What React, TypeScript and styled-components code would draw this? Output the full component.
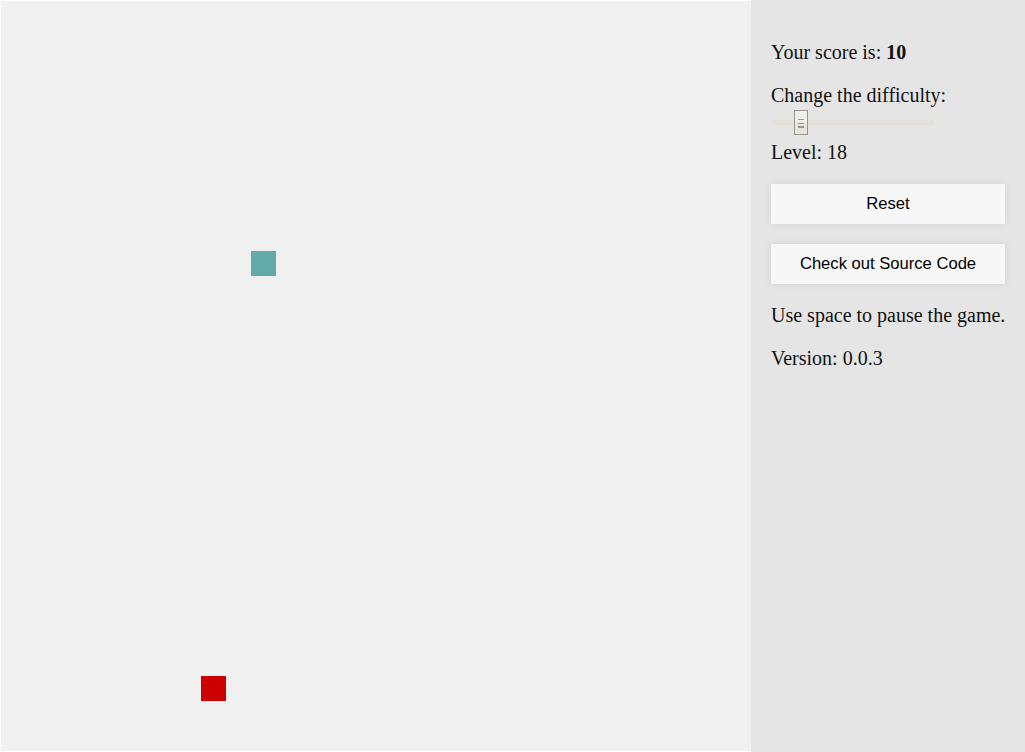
import React, { useState } from 'react';
import styled, { createGlobalStyle } from 'styled-components';

const GlobalStyle = createGlobalStyle`
  html, body {
    margin: 0;
    padding: 0;
    background: #ffffff;
    overflow: hidden;
  }
`;

const CELL = 25;

const S = {
    Page: styled.div`
    display: flex;
    width: 1025px;
    height: 752px;
    padding: 1px 0 0 1px;
    box-sizing: border-box;
  `,
    Board: styled.div`
    position: relative;
    width: 750px;
    height: 750px;
    background: #f0f0f0;
    flex: none;
  `,
    Cell: styled.div<{ $color: string }>`
    position: absolute;
    width: ${CELL}px;
    height: ${CELL}px;
    background: ${p => p.$color};
  `,
    Sidebar: styled.aside`
    flex: 1;
    margin-top: -1px;
    background: #e5e5e5;
    padding: 41px 20px 0 20px;
    display: flex;
    flex-direction: column;
    align-items: flex-start;
    font-family: "Liberation Serif", "Times New Roman", serif;
    font-size: 20px;
    color: #111;
  `,
    Text: styled.p<{ $gap?: number }>`
    margin: 0 0 ${p => p.$gap ?? 20}px 0;
    line-height: 23px;
    white-space: nowrap;
  `,
    Slider: styled.input`
    appearance: none;
    -webkit-appearance: none;
    width: 161px;
    height: 25px;
    margin: 3px 0 6px 2px;
    padding: 0;
    background: transparent;
    &::-webkit-slider-runnable-track {
      height: 5px;
      background: #e4dfd8;
    }
    &::-webkit-slider-thumb {
      -webkit-appearance: none;
      width: 14px;
      height: 25px;
      margin-top: -10px;
      box-sizing: border-box;
      border: 1px solid #9a958f;
      background:
        linear-gradient(#9a958f, #9a958f) 3px 8px / 6px 1px no-repeat,
        linear-gradient(#9a958f, #9a958f) 3px 12px / 6px 1px no-repeat,
        linear-gradient(#9a958f, #9a958f) 3px 15px / 6px 2px no-repeat,
        linear-gradient(#f0eeeb 50%, #e7e4df 50%);
    }
  `,
    Button: styled.button`
    width: 234px;
    height: 40px;
    border: none;
    padding: 0;
    background: #f7f7f7;
    box-shadow: 0 0 8px rgba(0, 0, 0, 0.08);
    font-family: "Liberation Sans", Arial, sans-serif;
    font-size: 16.6px;
    color: #000;
    cursor: pointer;
    margin: 0 0 20px 0;
  `,
};

const App: React.FC = () => {
    const [level, setLevel] = useState(18);
    return (
        <>
            <GlobalStyle />
            <S.Page>
                <S.Board>
                    <S.Cell $color="#62aaa8" style={{ left: 250, top: 250 }} />
                    <S.Cell $color="#cc0000" style={{ left: 200, top: 675 }} />
                </S.Board>
                <S.Sidebar>
                    <S.Text>
                        Your score is: <b>10</b>
                    </S.Text>
                    <S.Text $gap={0}>Change the difficulty:</S.Text>
                    <S.Slider
                        type="range"
                        min={1}
                        max={120}
                        value={level}
                        onChange={e => setLevel(Number(e.target.value))}
                    />
                    <S.Text>Level: {level}</S.Text>
                    <S.Button>Reset</S.Button>
                    <S.Button>Check out Source Code</S.Button>
                    <S.Text>Use space to pause the game.</S.Text>
                    <S.Text>Version: 0.0.3</S.Text>
                </S.Sidebar>
            </S.Page>
        </>
    );
};

export default App;
